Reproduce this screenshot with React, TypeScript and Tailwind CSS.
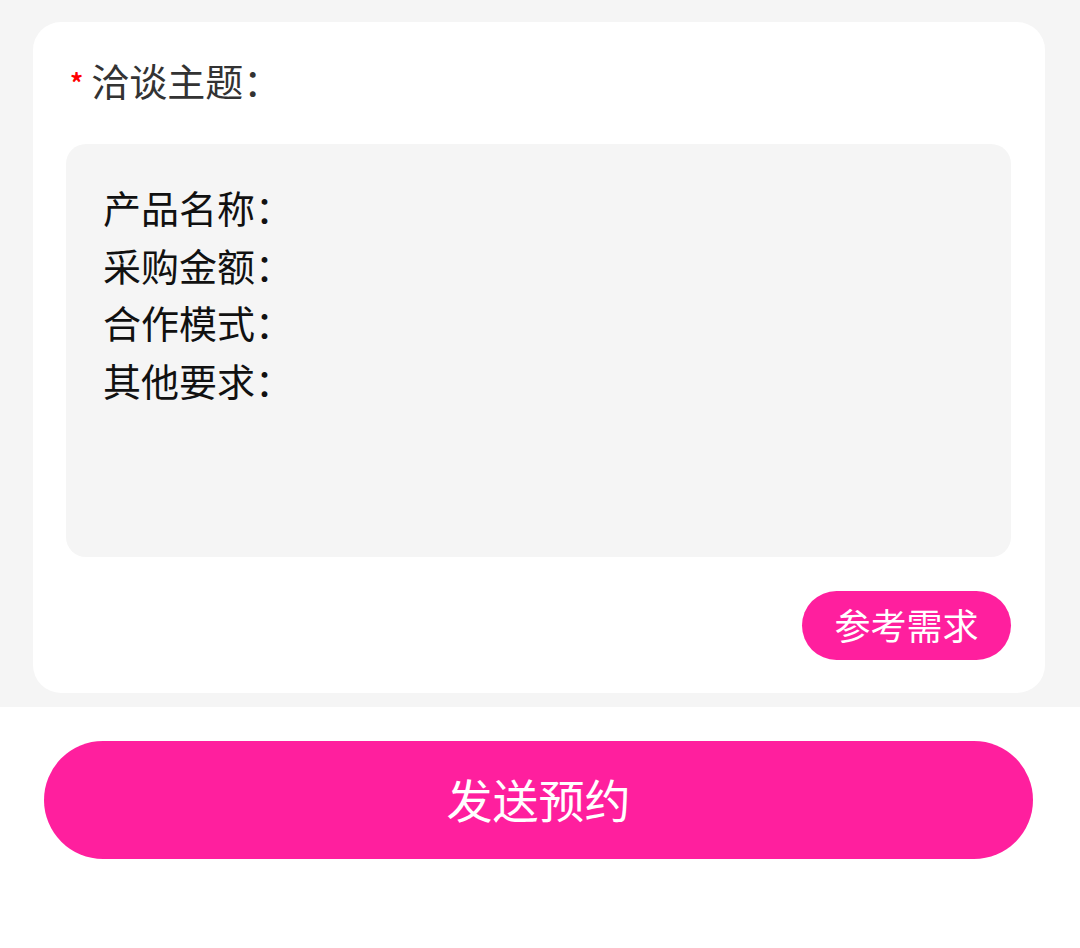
export default function App() {
  const font = { fontFamily: '"Noto Sans CJK SC", "Noto Sans", sans-serif' };
  return (
    <div className="w-[1080px] h-[948px] bg-white" style={font}>
      <div className="bg-[#f5f5f5] pt-[22px] pb-[14px] pl-[33px] pr-[35px]">
        <div className="bg-white rounded-[28px] pl-[37px] pr-[34px] pt-[36px] pb-[33px]">
          <div className="flex items-center h-[48px] pb-[4px]">
            <span className="text-[#ff0000] text-[26px] font-bold leading-none mr-[8px] mt-[4px]">*</span>
            <span className="text-[#333333] text-[38px] leading-none">洽谈主题：</span>
          </div>
          <div className="mt-[38px] -ml-[4px] bg-[#f5f5f5] rounded-[20px] h-[413px] pl-[37px] pt-[34px] text-[38px] leading-[57.5px] text-[#111111]">
            <div>产品名称：</div>
            <div>采购金额：</div>
            <div>合作模式：</div>
            <div>其他要求：</div>
          </div>
          <div className="flex justify-end mt-[34px]">
            <div className="w-[209px] h-[69px] rounded-full bg-[#ff1f9e] text-white text-[36px] flex items-center justify-center leading-none pb-[3px]">
              参考需求
            </div>
          </div>
        </div>
      </div>
      <div className="px-[44px] pt-[34px]">
        <div className="w-[989px] h-[118px] rounded-full bg-[#ff1f9e] text-white text-[46px] flex items-center justify-center leading-none pb-[4px]">
          发送预约
        </div>
      </div>
    </div>
  );
}
